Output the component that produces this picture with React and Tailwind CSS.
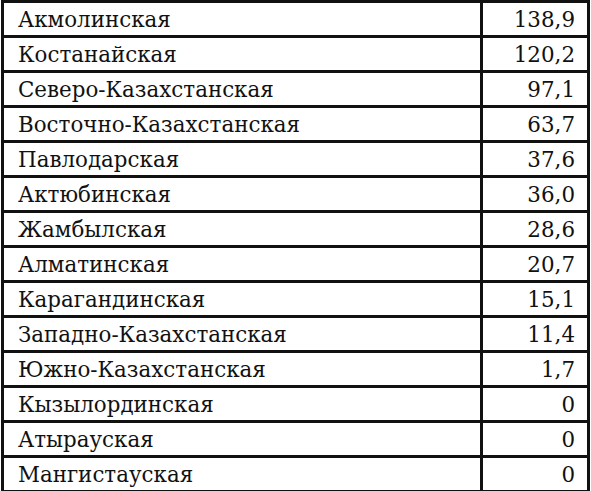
const rows = [
  ['Акмолинская', '138,9'],
  ['Костанайская', '120,2'],
  ['Северо-Казахстанская', '97,1'],
  ['Восточно-Казахстанская', '63,7'],
  ['Павлодарская', '37,6'],
  ['Актюбинская', '36,0'],
  ['Жамбылская', '28,6'],
  ['Алматинская', '20,7'],
  ['Карагандинская', '15,1'],
  ['Западно-Казахстанская', '11,4'],
  ['Южно-Казахстанская', '1,7'],
  ['Кызылординская', '0'],
  ['Атырауская', '0'],
  ['Мангистауская', '0'],
]

export default function App() {
  return (
    <div className="w-[591px] h-[491px] bg-white pl-px">
      <table className="w-[589px] border-collapse font-['DejaVu_Serif',serif] text-[21.4px] text-[#111]">
        <tbody>
          {rows.map(([name, value]) => (
            <tr key={name} className="h-[35px]">
              <td className="border-[3px] border-[#111] pl-[14px] pr-2 pt-[2px] leading-none">{name}</td>
              <td className="w-[107px] border-[3px] border-[#111] pr-[12px] pt-[2px] text-right leading-none">{value}</td>
            </tr>
          ))}
        </tbody>
      </table>
    </div>
  )
}
